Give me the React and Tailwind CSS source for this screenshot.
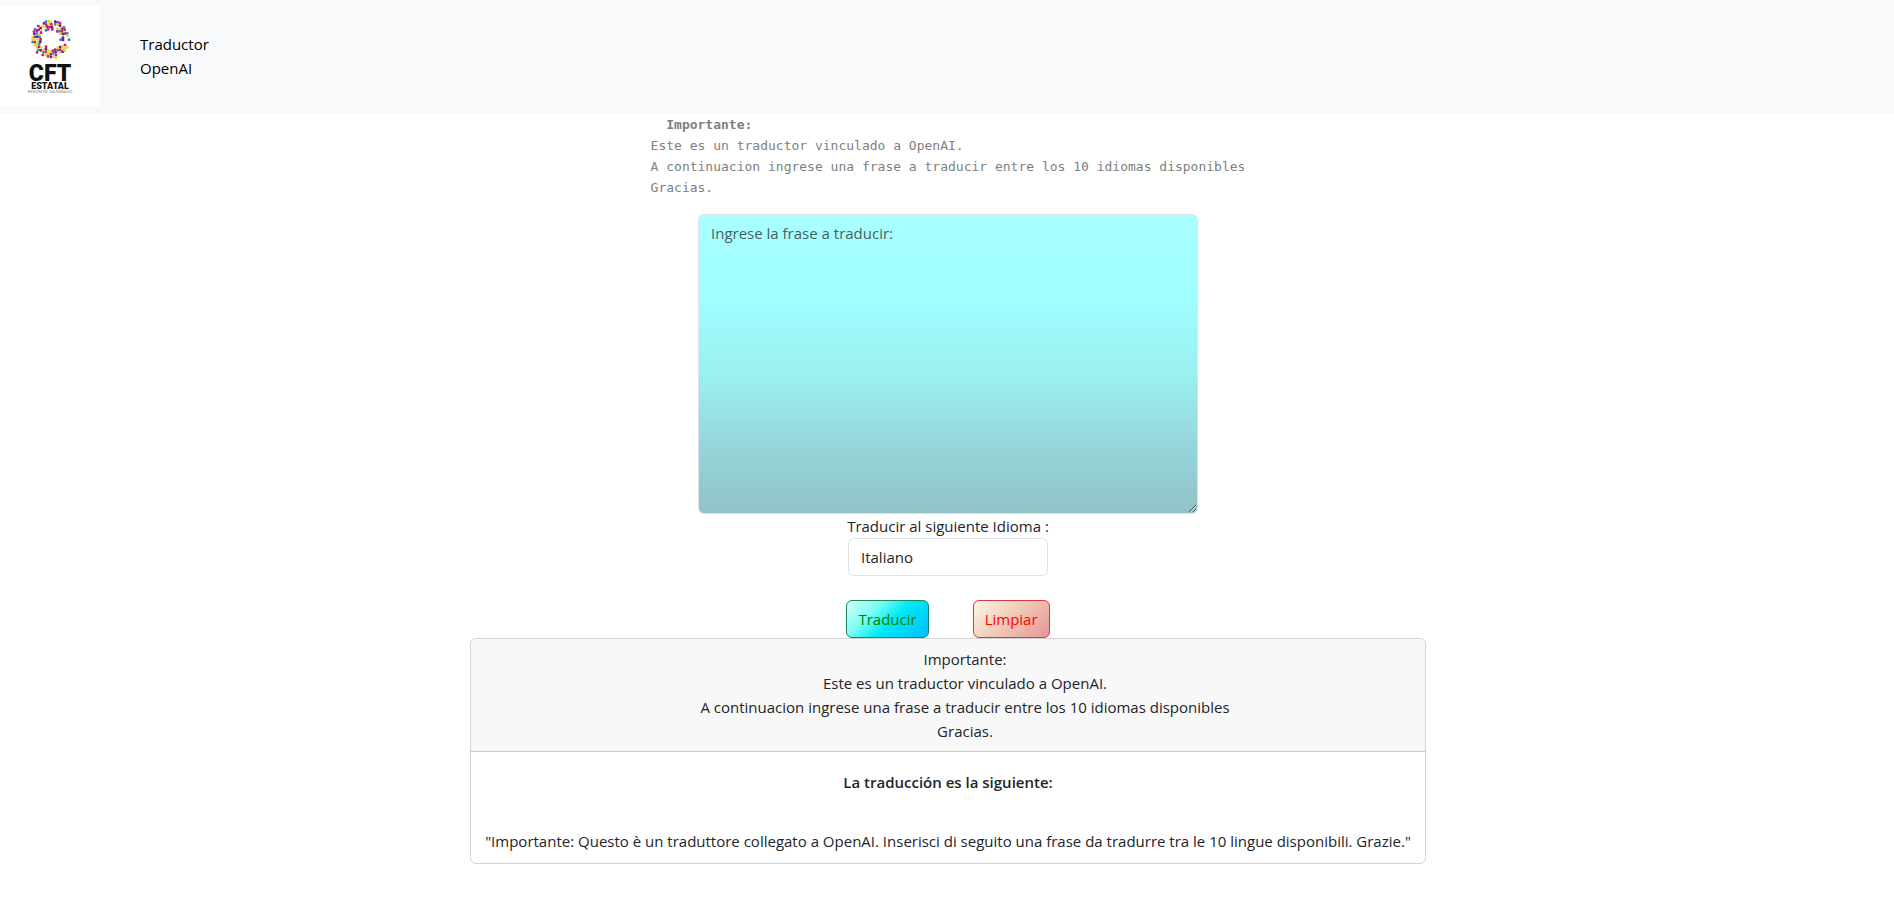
const COLORS = {
  m: "#d4148c",
  r: "#d81b55",
  y: "#f6cf3a",
  b: "#1b8fd0",
  p: "#6b2089",
  g: "#cfe03c",
};

// Confetti ring of the logo: x, y, colour
const DOTS = [
  [54, 14, "b"], [63, 12, "g"], [68, 15, "y"], [82, 14, "p"], [89, 16, "m"], [96, 18, "m"],
  [48, 19, "p"], [55, 23, "m"], [62, 20, "y"], [70, 22, "r"], [82, 22, "b"], [89, 23, "g"], [96, 26, "p"],
  [31, 27, "m"], [38, 33, "p"], [44, 28, "y"], [51, 30, "g"], [58, 29, "r"], [65, 30, "m"], [72, 30, "p"], [73, 37, "m"], [60, 37, "r"],
  [21, 37, "b"], [27, 41, "p"], [33, 38, "m"], [40, 40, "g"], [54, 40, "b"],
  [88, 35, "y"], [95, 36, "g"], [108, 31, "b"], [103, 35, "m"], [110, 38, "r"], [88, 43, "m"], [95, 43, "b"], [102, 43, "r"], [109, 45, "y"], [97, 50, "g"], [105, 51, "p"], [112, 50, "m"], [118, 49, "b"],
  [18, 44, "m"], [19, 51, "p"], [26, 49, "b"], [33, 52, "y"], [39, 47, "m"],
  [14, 60, "y"], [21, 60, "m"], [28, 59, "p"], [35, 60, "b"], [14, 67, "g"], [22, 68, "y"], [30, 67, "g"], [38, 67, "m"],
  [14, 75, "b"], [21, 76, "m"], [30, 75, "y"], [37, 74, "p"], [20, 83, "y"], [27, 83, "g"], [34, 82, "b"],
  [105, 62, "p"], [98, 68, "b"], [105, 69, "p"], [123, 68, "b"], [118, 56, "g"],
  [26, 91, "y"], [33, 90, "m"], [40, 91, "g"], [54, 89, "m"], [31, 99, "b"], [38, 100, "p"], [27, 106, "m"],
  [47, 98, "y"], [54, 97, "p"], [46, 106, "b"], [54, 105, "r"], [44, 114, "m"], [53, 113, "g"],
  [60, 102, "g"], [68, 104, "y"], [75, 101, "m"], [82, 98, "r"], [68, 112, "p"], [60, 110, "y"], [76, 109, "b"], [83, 106, "p"], [60, 118, "m"], [69, 120, "p"], [76, 118, "y"], [84, 115, "m"], [84, 122, "g"],
  [90, 92, "y"], [97, 90, "p"], [104, 88, "y"], [111, 84, "m"], [90, 100, "b"], [97, 98, "m"], [104, 96, "y"], [111, 93, "g"], [118, 91, "y"], [97, 106, "g"], [104, 104, "p"], [110, 101, "g"],
];

const buttonBase = "h-[38px] rounded-md border px-[11px]";

function Logo() {
  return (
    <svg viewBox="0 0 100 100" className="size-25 shrink-0 bg-white font-[Roboto,sans-serif]" role="img" aria-label="CFT Estatal">
      <g transform="translate(28 11) scale(0.3333)">
        {DOTS.map(([x, y, c], i) => (
          <rect key={i} x={x - 4} y={y - 4} width="8" height="8" rx="2.5" fill={COLORS[c]} />
        ))}
      </g>
      <text x="50" y="75" textAnchor="middle" fontWeight="900" fontSize="23" fill="#111">CFT</text>
      <text x="50" y="83" textAnchor="middle" fontWeight="900" fontSize="9" fill="#111">ESTATAL</text>
      <text x="50" y="87" textAnchor="middle" fontSize="4" fill="#888">REGIÓN DE VALPARAÍSO</text>
    </svg>
  );
}

export default function App() {
  return (
    <div className="min-h-screen bg-white font-['Open_Sans','Noto_Sans',sans-serif] text-[15px] leading-6 text-[#212529]">
      <header className="flex items-center gap-10 bg-[#f8f9fa] pt-1.5 pb-2">
        <Logo />
        <a href="#" className="text-black">
          Traductor
          <br />
          OpenAI
        </a>
      </header>
      <main className="flex flex-col items-center pl-0.5">
        <pre className="mb-4 font-['DejaVu_Sans_Mono',monospace] text-[13px] leading-[21px] text-[#808080]">
          <b>{"  Importante:"}</b>
          {"\nEste es un traductor vinculado a OpenAI.\nA continuacion ingrese una frase a traducir entre los 10 idiomas disponibles\nGracias."}
        </pre>
        <textarea
          aria-label="Ingrese la frase a traducir"
          placeholder="Ingrese la frase a traducir:"
          className="block h-[300px] w-[500px] max-w-full rounded-md border border-[#dee2e6] bg-[linear-gradient(180deg,#aaffff_0%,#9fffff_27%,#9bf0f0_53%,#95d7dc_76%,#92c3c8_100%)] px-3 py-1.5 placeholder:text-[#212529]/75"
        />
        <label htmlFor="idioma">Traducir al siguiente Idioma :</label>
        <select id="idioma" className="mb-6 h-[38px] w-50 appearance-none rounded-md border border-[#dee2e6] bg-white px-3">
          <option>Italiano</option>
        </select>
        <div className="flex gap-11">
          <button
            type="button"
            className={`${buttonBase} border-[#198754] bg-[linear-gradient(135deg,#d5fffa_0%,#7dfdf3_30%,#00eaf5_55%,#00bfff_100%)] text-[#008000]`}
          >
            Traducir
          </button>
          <button
            type="button"
            className={`${buttonBase} border-[#dc3545] bg-[linear-gradient(135deg,#fdf5e6_0%,#f1cdb8_45%,#e89499_100%)] text-[#ff0000]`}
          >
            Limpiar
          </button>
        </div>
        <section className="w-[956px] max-w-full rounded-md border border-[#d2d3d4] text-center">
          <p className="rounded-t-md border-b border-[#c8c9ca] bg-[#f8f8f8] py-2 pr-4 pl-[50px]">
            Importante:
            <br />
            Este es un traductor vinculado a OpenAI.
            <br />
            A continuacion ingrese una frase a traducir entre los 10 idiomas disponibles
            <br />
            Gracias.
          </p>
          <div className="flex flex-col gap-[35px] p-2.5">
            <h2 className="pt-2 font-semibold">La traducción es la siguiente:</h2>
            <p>
              "Importante: Questo è un traduttore collegato a OpenAI. Inserisci di seguito una frase da tradurre tra le 10
              lingue disponibili. Grazie."
            </p>
          </div>
        </section>
      </main>
    </div>
  );
}
